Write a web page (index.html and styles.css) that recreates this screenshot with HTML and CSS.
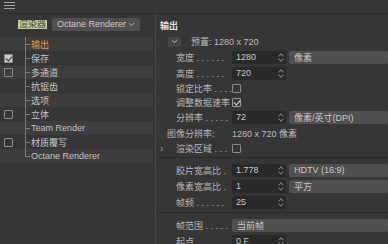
FILE: index.html
```html
<!DOCTYPE html>
<html lang="zh">
<head>
    <meta charset="UTF-8">
    <meta name="viewport" content="width=device-width, initial-scale=1.0">
    <title>渲染设置</title>
    <link rel="stylesheet" href="styles.css">
</head>
<body>

<div class="topbar">
    <span class="menu-icon"><i></i><i></i><i></i></span>
</div>

<div class="main">
    <aside class="sidebar">
        <div class="renderer-row">
            <span class="renderer-label">渲染器</span>
            <div class="select renderer-select">
                <span>Octane Renderer</span>
                <svg class="chev" width="7" height="5" viewBox="0 0 7 5"><path d="M1 1.2 L3.5 3.6 L6 1.2" fill="none" stroke="#b0b0b0" stroke-width="1"/></svg>
            </div>
        </div>

        <ul class="tree">
            <li class="tree-row active"><span class="check-slot"></span><span class="tree-label">输出</span></li>
            <li class="tree-row"><span class="check-slot"><span class="box checked"></span></span><span class="tree-label">保存</span></li>
            <li class="tree-row"><span class="check-slot"><span class="box"></span></span><span class="tree-label">多通道</span></li>
            <li class="tree-row"><span class="check-slot"></span><span class="tree-label">抗锯齿</span></li>
            <li class="tree-row"><span class="check-slot"></span><span class="tree-label">选项</span></li>
            <li class="tree-row"><span class="check-slot"><span class="box"></span></span><span class="tree-label">立体</span></li>
            <li class="tree-row"><span class="check-slot"></span><span class="tree-label">Team Render</span></li>
            <li class="tree-row"><span class="check-slot"><span class="box"></span></span><span class="tree-label">材质覆写</span></li>
            <li class="tree-row last"><span class="check-slot"></span><span class="tree-label">Octane Renderer</span></li>
        </ul>
    </aside>

    <section class="panel">
        <h2 class="panel-title">输出</h2>

        <div class="preset-row">
            <span class="fold-btn">
                <svg width="7" height="5" viewBox="0 0 7 5"><path d="M1 1.2 L3.5 3.6 L6 1.2" fill="none" stroke="#b8b8b8" stroke-width="1"/></svg>
            </span>
            <span>预置: 1280 x 720</span>
        </div>

        <div class="field-row">
            <span class="label">宽度 . . . . . .</span>
            <div class="num">1280<span class="spin"></span></div>
            <div class="select">像素</div>
        </div>
        <div class="field-row">
            <span class="label">高度 . . . . . .</span>
            <div class="num">720<span class="spin"></span></div>
        </div>
        <div class="field-row short">
            <span class="label">锁定比率 . . . .</span>
            <span class="box"></span>
        </div>
        <div class="field-row short">
            <span class="label">调整数据速率</span>
            <span class="box checked dark"></span>
        </div>
        <div class="field-row">
            <span class="label">分辨率 . . . . .</span>
            <div class="num">72<span class="spin"></span></div>
            <div class="select">像素/英寸(DPI)</div>
        </div>
        <div class="field-row">
            <span class="label wide">图像分辨率:</span>
            <span class="value">1280 x 720 像素</span>
        </div>
        <div class="field-row short">
            <span class="label"><span class="expand">›</span>渲染区域 . . .</span>
            <span class="box"></span>
        </div>

        <div class="separator"></div>

        <div class="field-row">
            <span class="label">胶片宽高比 .</span>
            <div class="num">1.778<span class="spin"></span></div>
            <div class="select">HDTV (16:9)</div>
        </div>
        <div class="field-row">
            <span class="label">像素宽高比 .</span>
            <div class="num">1<span class="spin"></span></div>
            <div class="select">平方</div>
        </div>
        <div class="field-row">
            <span class="label">帧频 . . . . . .</span>
            <div class="num">25<span class="spin"></span></div>
        </div>

        <div class="separator"></div>

        <div class="field-row">
            <span class="label">帧范围 . . . . .</span>
            <div class="select span-2">当前帧</div>
        </div>
        <div class="field-row">
            <span class="label">起点 . . . . . .</span>
            <div class="num">0 F<span class="spin"></span></div>
        </div>
    </section>
</div>

</body>
</html>
```

FILE: styles.css
```css
* {
    box-sizing: border-box;
}

body {
    margin: 0;
    width: 388px;
    height: 244px;
    overflow: hidden;
    background-color: #363636;
    color: #c4c4c4;
    font-family: "Liberation Sans", "Noto Sans CJK SC", sans-serif;
    font-size: 9px;
}

.topbar {
    height: 14px;
    border-bottom: 1px solid #2b2b2b;
    padding: 2px 0 0 4px;
}

.menu-icon {
    display: flex;
    flex-direction: column;
    gap: 2px;
    width: 11px;
}

.menu-icon i {
    display: block;
    height: 1px;
    background-color: #a0a0a0;
}

.main {
    display: flex;
    height: 230px;
}

/* left side: renderer + tree */

.sidebar {
    width: 155px;
    flex-shrink: 0;
}

.renderer-row {
    height: 23px;
    display: flex;
    align-items: center;
    padding: 0 0 3px 18px;
}

.renderer-label {
    background-color: #c3c99b;
    color: #3d4a33;
    padding: 0 1px;
    line-height: 9px;
    margin-right: 5px;
}

.select {
    height: 13px;
    background-color: #505050;
    border-radius: 2px;
    color: #c8c8c8;
    padding: 0 5px;
    display: flex;
    align-items: center;
    justify-content: space-between;
    white-space: nowrap;
}

.renderer-select {
    width: 88px;
    font-size: 9px;
}

.tree {
    list-style: none;
    margin: 0;
    padding: 0;
    width: 153px;
}

.tree-row {
    position: relative;
    height: 14px;
    display: flex;
    align-items: center;
}

.tree-row:nth-child(odd) {
    background-color: #3d3d3d;
}

.tree-row::before {
    content: "";
    position: absolute;
    left: 25px;
    top: 0;
    bottom: 0;
    border-left: 1px solid #7a7a7a;
}

.tree-row.last::before {
    bottom: 7px;
}

.tree-row::after {
    content: "";
    position: absolute;
    left: 25px;
    top: 7px;
    width: 5px;
    border-top: 1px solid #7a7a7a;
}

.check-slot {
    width: 31px;
    padding-left: 4px;
    display: flex;
    align-items: center;
}

.tree-label {
    white-space: nowrap;
}

.tree-row.active .tree-label {
    color: #ee9a35;
}

.box {
    position: relative;
    display: inline-block;
    width: 9px;
    height: 9px;
    border: 1px solid #8a8a8a;
    border-radius: 1px;
}

.box.checked {
    background-color: #c8c8c8;
}

.box.checked::after {
    content: "";
    position: absolute;
    left: 2px;
    top: 0px;
    width: 3px;
    height: 5px;
    border: solid #2e2e2e;
    border-width: 0 1px 1px 0;
    transform: rotate(40deg);
}

.box.checked.dark {
    background-color: transparent;
    border-color: #9a9a9a;
}

.box.checked.dark::after {
    border-color: #e6e6e6;
}

/* right side: output settings */

.panel {
    flex: 1;
    border-left: 1px solid #474747;
}

.panel-title {
    margin: 0;
    height: 20px;
    padding: 5px 0 0 4px;
    font-size: 9px;
    font-weight: bold;
    color: #e2e2e2;
}

.preset-row {
    height: 15px;
    display: flex;
    align-items: center;
    padding-left: 12px;
    color: #bcbcbc;
}

.fold-btn {
    width: 13px;
    height: 10px;
    margin-right: 10px;
    background-color: #464646;
    border-radius: 2px;
    display: flex;
    align-items: center;
    justify-content: center;
}

.field-row {
    height: 16px;
    display: grid;
    grid-template-columns: 53px 54px 1fr;
    column-gap: 3px;
    align-items: center;
    padding-left: 20px;
}

.field-row.short {
    height: 14px;
}

.label {
    white-space: nowrap;
    color: #b8b8b8;
}

.label.wide {
    margin-left: -9px;
}

.expand {
    display: inline-block;
    width: 16px;
    margin-left: -16px;
    color: #9a9a9a;
    font-size: 10px;
}

.value {
    grid-column: 2 / 4;
    color: #bcbcbc;
}

.num {
    height: 13px;
    background-color: #292929;
    border-radius: 2px;
    padding-left: 4px;
    display: flex;
    align-items: center;
    justify-content: space-between;
    color: #c8c8c8;
}

.spin {
    width: 7px;
    height: 11px;
    margin-right: 1px;
    position: relative;
}

.spin::before,
.spin::after {
    content: "";
    position: absolute;
    left: 1px;
    width: 3px;
    height: 3px;
    border: solid #7c7c7c;
    border-width: 1px 0 0 1px;
}

.spin::before {
    top: 2px;
    transform: rotate(45deg);
}

.spin::after {
    top: 5px;
    transform: rotate(225deg);
}

.select.span-2 {
    grid-column: 2 / 4;
}

.separator {
    height: 1px;
    margin: 2px 0 4px 3px;
    background-color: #2a2a2a;
}
```
